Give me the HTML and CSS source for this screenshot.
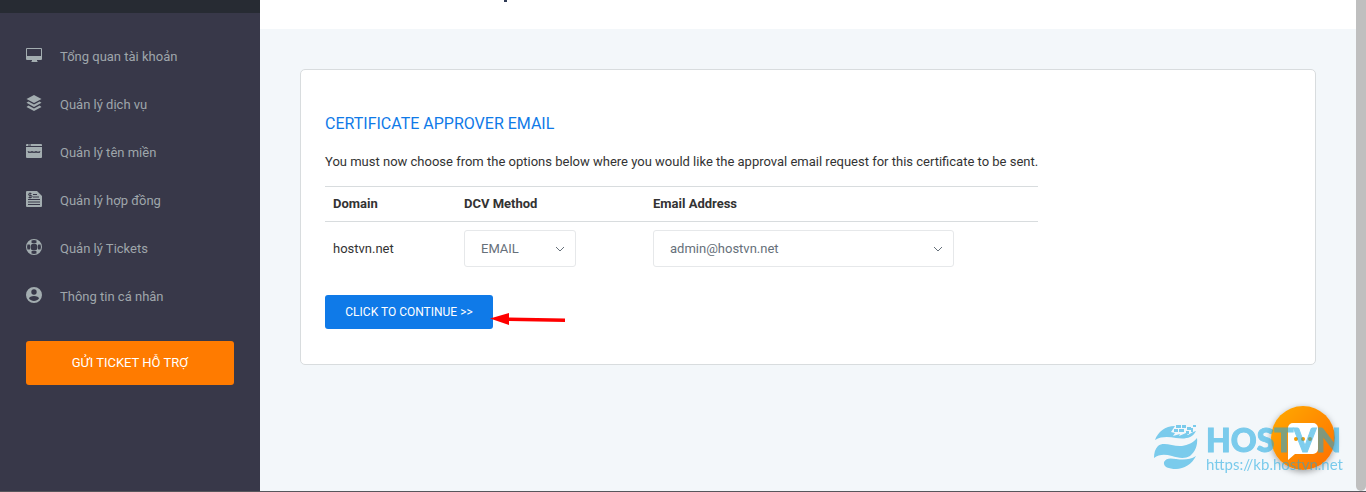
FILE: index.html
```
<!DOCTYPE html>
<html lang="vi">
<head>
    <meta charset="UTF-8">
    <meta name="viewport" content="width=device-width, initial-scale=1.0">
    <title>Certificate Approver Email</title>
    <link rel="stylesheet" href="styles.css">
</head>
<body>
    <div class="layout">
        <aside class="sidebar">
            <div class="sidebar-top"></div>
            <nav class="menu">
                <a href="#">
                    <svg viewBox="0 0 16 16" aria-hidden="true"><path fill-rule="evenodd" d="M1 1h14a1 1 0 0 1 1 1v10a1 1 0 0 1-1 1h-4v1l1 1H5l1-1v-1H1a1 1 0 0 1-1-1V2a1 1 0 0 1 1-1zm0 1v7h14V2z"/></svg>
                    Tổng quan tài khoản
                </a>
                <a href="#">
                    <svg viewBox="0 0 16 16" aria-hidden="true"><path d="M8 0l7.500 3.900L8 7.900.5 3.900zM.5 7.700L2.400 6.400 8 9.400l5.600-3 1.900 1.300L8 12zM.5 11.900l1.900-1.300L8 13.600l5.600-3 1.900 1.300L8 16z"/></svg>
                    Quản lý dịch vụ
                </a>
                <a href="#">
                    <svg viewBox="0 0 16 16" aria-hidden="true"><path d="M1 1h14a1 1 0 0 1 1 1v12a1 1 0 0 1-1 1H1a1 1 0 0 1-1-1V2a1 1 0 0 1 1-1z"/><path class="cut" d="M0 3.500h16M2 2h3M2 8l1 2 1-1.500L5 10l1-2 1 2 1-1.500L9 10l1-2 1 2 1-1.500 1 1.500 1-2"/></svg>
                    Quản lý tên miền
                </a>
                <a href="#">
                    <svg viewBox="0 0 16 16" aria-hidden="true"><path d="M1 0h10l5 5v10a1 1 0 0 1-1 1H1a1 1 0 0 1-1-1V1a1 1 0 0 1 1-1z"/><path class="cut" d="M2 8.500h12M2 11h12M2 13.500h12M7 3.500h4M7 6h6M5.500 2.500H3.500a1 1 0 0 0 0 2H5a1 1 0 0 1 0 2H2.500M4 1.500v6"/></svg>
                    Quản lý hợp đồng
                </a>
                <a href="#">
                    <svg viewBox="0 0 16 16" aria-hidden="true"><path fill-rule="evenodd" d="M8 0a8 8 0 1 1 0 16A8 8 0 0 1 8 0zm0 4.500a3.500 3.500 0 1 0 0 7 3.500 3.500 0 0 0 0-7zM5.500 1.500v2.200L6 4h4l.5-.3V1.500a7 7 0 0 0-5 0zm0 13a7 7 0 0 0 5 0v-2.200L10 12H6l-.5.300zM1.500 5.500a7 7 0 0 0 0 5h2.200L4 10V6l-.3-.5zm13 0h-2.200L12 6v4l.3.500h2.200a7 7 0 0 0 0-5z"/></svg>
                    Quản lý Tickets
                </a>
                <a href="#">
                    <svg viewBox="0 0 16 16" aria-hidden="true"><path fill-rule="evenodd" d="M8 0a8 8 0 1 1 0 16A8 8 0 0 1 8 0zm0 2.300a2.700 2.700 0 1 0 0 5.400 2.700 2.700 0 0 0 0-5.400zM8 9c-2.700 0-5 1.200-5 2.400a6 6 0 0 0 10 0C13 10.200 10.700 9 8 9z"/></svg>
                    Thông tin cá nhân
                </a>
            </nav>
            <button type="button" class="btn-ticket">GỬI TICKET HỖ TRỢ</button>
        </aside>

        <main class="content">
            <header class="page-header"><span class="header-mark"></span></header>
            <section class="card">
                <form class="approver">
                    <h2>CERTIFICATE APPROVER EMAIL</h2>
                    <p>You must now choose from the options below where you would like the approval email request for this certificate to be sent.</p>
                    <table>
                        <thead>
                            <tr>
                                <th class="col-domain">Domain</th>
                                <th class="col-method" id="method-label">DCV Method</th>
                                <th id="email-label">Email Address</th>
                            </tr>
                        </thead>
                        <tbody>
                            <tr>
                                <td>hostvn.net</td>
                                <td>
                                    <div class="select-wrap method">
                                        <select name="method" aria-labelledby="method-label"><option>EMAIL</option></select>
                                        <svg viewBox="0 0 10 6" aria-hidden="true"><path d="M1 1l4 4 4-4"/></svg>
                                    </div>
                                </td>
                                <td>
                                    <div class="select-wrap email">
                                        <select name="email" aria-labelledby="email-label"><option>admin@hostvn.net</option></select>
                                        <svg viewBox="0 0 10 6" aria-hidden="true"><path d="M1 1l4 4 4-4"/></svg>
                                    </div>
                                </td>
                            </tr>
                        </tbody>
                    </table>
                    <div class="actions">
                        <button type="submit" class="btn-continue">CLICK TO CONTINUE &gt;&gt;</button>
                        <svg class="arrow" viewBox="0 0 76 12" aria-hidden="true"><path d="M0 5.500L19 0v4.500l56 1V9l-56-1v4z"/></svg>
                    </div>
                </form>
            </section>
        </main>
        <div class="scrollbar"></div>
    </div>

    <button type="button" class="chat" aria-label="Chat">
        <svg viewBox="0 0 32 38" aria-hidden="true">
            <path fill="#fff" d="M6 0h20a5 5 0 0 1 5 5v21a5 5 0 0 1-5 5H8l-7 6V5a5 5 0 0 1 5-5z"/>
            <g fill="#f79a00"><circle cx="9" cy="16" r="2"/><circle cx="16" cy="16" r="2"/><circle cx="23" cy="16" r="2"/></g>
        </svg>
    </button>

    <div class="watermark">
        <svg viewBox="0 0 44 46" aria-hidden="true">
            <path d="M1 16C4 8 11 2 21 2l-4 6 4 1-2 3 7-2-1 2 7-3 2 2 5-3 3-1c-4 8-12 8-20 7-7-1-14-2-21 2z"/>
            <path d="M0 34c0-5 1-9 4-12 6-5 15 1 24 0 6-1 11-3 15-8 1 7-2 14-7 18-5 3-12 2-18 0-7-2-13-2-18 2z"/>
            <path d="M10 38c2-4 6-4 12-3 7 1 14 1 20-3-4 8-12 13-20 13-7 0-13-2-12-7z"/>
            <path d="M22 1h5v3h-5zM28 1h4v3h-4zM33 3h4v3h-4zM39 1h3v2h-3zM20 5h4v3h-4zM25 5h5v3h-5zM32 7h3v3h-3zM37 4h2v4h-2z"/>
        </svg>
        <div>
            <strong>HOSTVN</strong>
            <span>https://kb.hostvn.net</span>
        </div>
    </div>
</body>
</html>
```
FILE: styles.css
```
* {
    box-sizing: border-box;
}
body {
    margin: 0;
    font-family: Roboto, sans-serif;
    font-size: 13px;
    line-height: 20px;
    color: #333;
    background: #f3f7fa;
}
button, select {
    font-family: inherit;
}
.layout {
    display: flex;
    min-height: 100vh;
    border-bottom: 1px solid #57565c;
}

/* sidebar */
.sidebar {
    width: 260px;
    flex-shrink: 0;
    background: #383849;
}
.sidebar-top {
    height: 13px;
    background: #272b33;
}
.menu {
    padding-top: 20px;
}
.menu a {
    display: flex;
    align-items: center;
    gap: 18px;
    height: 48px;
    padding-left: 26px;
    color: #9fa6ab;
    text-decoration: none;
}
.menu svg {
    width: 16px;
    height: 16px;
    margin-bottom: 4px;
    fill: #a3adb0;
}
.menu .cut {
    fill: none;
    stroke: #383849;
}
.btn-ticket {
    display: block;
    width: 208px;
    height: 44px;
    margin: 20px 26px;
    padding: 0 0 2px;
    border: none;
    border-radius: 3px;
    background: #ff7b00;
    color: #fff;
    font-size: 13px;
    cursor: pointer;
}

/* content */
.content {
    flex: 1;
}
.page-header {
    height: 29px;
    padding-left: 244px;
    background: #fff;
}
.header-mark {
    display: block;
    width: 3px;
    height: 2px;
    background: #2f3b55;
}
.card {
    margin: 40px;
    padding: 43px 24px 35px;
    background: #fff;
    border: 1px solid #d8dcde;
    border-radius: 5px;
}
.approver {
    width: 713px;
    max-width: 100%;
}
h2 {
    margin: 0 0 17px;
    font-size: 16px;
    font-weight: 400;
    line-height: 22px;
    color: #0f7ae8;
}
p {
    margin: 0 0 14px;
    white-space: nowrap;
}
table {
    width: 100%;
    table-layout: fixed;
    border-collapse: collapse;
}
th, td {
    padding: 8px;
    text-align: left;
}
td {
    padding-bottom: 9px;
    line-height: 18px;
}
th {
    height: 35px;
    padding: 7px 8px;
    border-top: 1px solid #d8dcde;
    border-bottom: 1px solid #d8dcde;
    font-weight: 700;
}
.col-domain {
    width: 131px;
}
.col-method {
    width: 189px;
}
.select-wrap {
    position: relative;
}
.select-wrap.method {
    width: 112px;
}
.select-wrap.email {
    width: 301px;
}
select {
    display: block;
    width: 100%;
    height: 37px;
    padding: 0 16px;
    border: 1px solid #e6e8ea;
    border-radius: 3px;
    background: #fff;
    color: #66707a;
    font-size: 13px;
    appearance: none;
}
.select-wrap svg {
    position: absolute;
    top: 16px;
    right: 11px;
    width: 10px;
    height: 6px;
    fill: none;
    stroke: #66707a;
    pointer-events: none;
}
.actions {
    display: flex;
    align-items: center;
    margin-top: 19px;
}
.btn-continue {
    width: 168px;
    height: 34px;
    padding: 0;
    border: none;
    border-radius: 3px;
    background: #0f7ae8;
    color: #fff;
    font-size: 12px;
    cursor: pointer;
}
.arrow {
    width: 76px;
    height: 12px;
    margin: 14px 0 0 -3px;
    fill: #f00;
}
.scrollbar {
    width: 10px;
    background: #bfbfbf;
    border-radius: 0 0 5px 5px;
}

/* floating chat button and site mark */
.chat {
    position: fixed;
    right: 31px;
    bottom: 22px;
    display: flex;
    justify-content: center;
    width: 64px;
    height: 64px;
    padding: 17px 0 0;
    border: none;
    border-radius: 50%;
    background: linear-gradient(135deg, #ffab00, #ff6d00);
    box-shadow: 0 2px 6px rgba(0, 0, 0, 0.35);
    cursor: pointer;
}
.chat svg {
    width: 32px;
    height: 38px;
}
.watermark {
    position: fixed;
    right: 26px;
    bottom: 20px;
    display: flex;
    align-items: flex-start;
    gap: 8px;
    color: #1ba8e0;
    opacity: 0.56;
    pointer-events: none;
}
.watermark svg {
    width: 44px;
    height: 46px;
    fill: currentColor;
}
.watermark div {
    width: 134px;
    font-family: Lato, sans-serif;
}
.watermark strong {
    display: block;
    font-size: 32px;
    font-weight: 900;
    line-height: 32px;
    -webkit-text-stroke: 1px currentColor;
}
.watermark span {
    display: block;
    font-size: 15px;
    line-height: 16px;
}
```
